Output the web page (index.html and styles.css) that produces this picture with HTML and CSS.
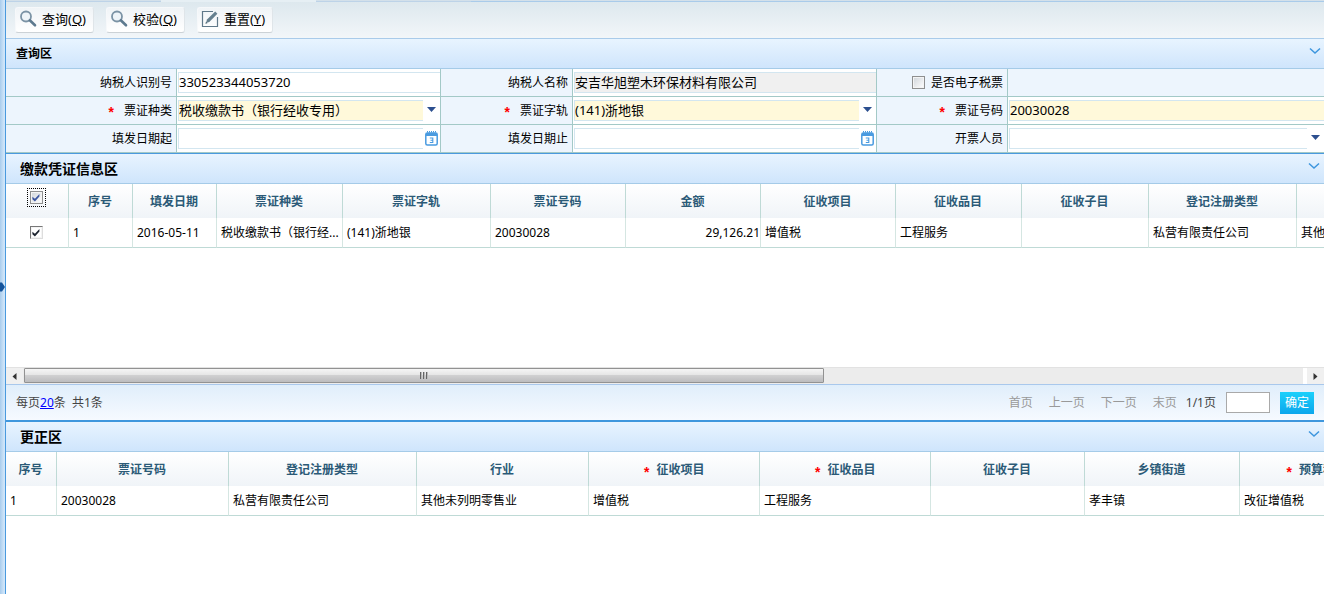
FILE: index.html
```html
<!DOCTYPE html>
<html lang="zh-CN">
<head>
<meta charset="utf-8">
<title>查询区</title>
<link rel="stylesheet" href="styles.css">
</head>
<body>
<div class="app">
  <aside class="rail"><button class="rail-handle" type="button" aria-label="展开"></button></aside>
  <main class="main">
    <div class="tabs"><span class="tab"></span><span class="tab tab-active"></span><span class="tab"></span><span class="tab-rest"></span></div>

    <div class="toolbar">
      <button class="tool" type="button">
        <svg class="tool-icon" viewBox="0 0 18 18"><circle cx="7" cy="6.5" r="5" fill="#eef4f8" stroke="#7b93a5" stroke-width="1.8"/><path d="M10.8 10.3l5.2 5" stroke="#5d7a8f" stroke-width="2.6" stroke-linecap="round"/></svg>
        <span>查询(<u>Q</u>)</span>
      </button>
      <button class="tool" type="button">
        <svg class="tool-icon" viewBox="0 0 18 18"><circle cx="7" cy="6.5" r="5" fill="#eef4f8" stroke="#7b93a5" stroke-width="1.8"/><path d="M10.8 10.3l5.2 5" stroke="#5d7a8f" stroke-width="2.6" stroke-linecap="round"/></svg>
        <span>校验(<u>Q</u>)</span>
      </button>
      <button class="tool" type="button">
        <svg class="tool-icon" viewBox="0 0 18 18"><path d="M12 1.5H1.5v15h15V7" fill="none" stroke="#5f7889" stroke-width="1.2"/><path d="M5 13l1-3.4 8.2-8 2.2 2.2-8.1 8.1z" fill="#66808f"/><path d="M4.4 13.8l.6-2 1.4 1.4z" fill="#3f5a6b"/></svg>
        <span>重置(<u>Y</u>)</span>
      </button>
    </div>

    <section>
      <header class="bar bar-first">
        <h2 class="bar-title title-small">查询区</h2>
        <button class="fold" type="button" aria-label="折叠"><svg class="chevron" viewBox="0 0 12 8"><path d="M1 1.5l5 4.5 5-4.5" fill="none" stroke="#3d96de" stroke-width="1.5"/></svg></button>
      </header>
      <form class="form">
        <label class="name" for="f-id">纳税人识别号</label>
        <div class="field"><input class="box" id="f-id" type="text" value="330523344053720"></div>
        <label class="name" for="f-name">纳税人名称</label>
        <div class="field"><input class="box box-locked" id="f-name" type="text" value="安吉华旭塑木环保材料有限公司" readonly></div>
        <div class="name name-check"><input class="check check-empty" id="f-e" type="checkbox"><label for="f-e">是否电子税票</label></div>
        <div class="field field-blank"></div>

        <label class="name" for="f-kind"><span class="star">*</span>票证种类</label>
        <div class="field"><select class="box box-must" id="f-kind"><option>税收缴款书（银行经收专用）</option></select><svg class="arrow" viewBox="0 0 17 20"><path d="M4 6h9l-4.500 5z" fill="#2c4f8f"/></svg></div>
        <label class="name" for="f-word"><span class="star">*</span>票证字轨</label>
        <div class="field"><select class="box box-must" id="f-word"><option>(141)浙地银</option></select><svg class="arrow" viewBox="0 0 17 20"><path d="M4 6h9l-4.500 5z" fill="#2c4f8f"/></svg></div>
        <label class="name" for="f-no"><span class="star">*</span>票证号码</label>
        <div class="field"><input class="box box-must" id="f-no" type="text" value="20030028"></div>

        <label class="name" for="f-from">填发日期起</label>
        <div class="field"><input class="box" id="f-from" type="text"><button class="date" type="button" aria-label="选择日期"><svg class="cal" viewBox="0 0 13 15"><rect x=".8" y="2" width="11.400" height="12" rx="1.500" fill="#fff" stroke="#4a9be0" stroke-width="1.500"/><path d="M1 2h11v3H1z" fill="#4a9be0"/><path d="M2 .8h9" stroke="#4a9be0" stroke-width="1.400" stroke-dasharray="1 1"/><path d="M4.800 7h3v4.500h-3M5.500 9.200h2.300" fill="none" stroke="#4a9be0" stroke-width="1.100"/></svg></button></div>
        <label class="name" for="f-to">填发日期止</label>
        <div class="field"><input class="box" id="f-to" type="text"><button class="date" type="button" aria-label="选择日期"><svg class="cal" viewBox="0 0 13 15"><rect x=".8" y="2" width="11.400" height="12" rx="1.500" fill="#fff" stroke="#4a9be0" stroke-width="1.500"/><path d="M1 2h11v3H1z" fill="#4a9be0"/><path d="M2 .8h9" stroke="#4a9be0" stroke-width="1.400" stroke-dasharray="1 1"/><path d="M4.800 7h3v4.500h-3M5.500 9.200h2.300" fill="none" stroke="#4a9be0" stroke-width="1.100"/></svg></button></div>
        <label class="name" for="f-who">开票人员</label>
        <div class="field"><select class="box" id="f-who"><option></option></select><svg class="arrow" viewBox="0 0 17 20"><path d="M4 6h9l-4.500 5z" fill="#2c4f8f"/></svg></div>
      </form>
    </section>

    <section>
      <header class="bar bar-ruled">
        <h2 class="bar-title">缴款凭证信息区</h2>
        <button class="fold" type="button" aria-label="折叠"><svg class="chevron" viewBox="0 0 12 8"><path d="M1 1.500l5 4.500 5-4.500" fill="none" stroke="#3d96de" stroke-width="1.500"/></svg></button>
      </header>
      <div class="grid-view grid-tall">
        <table class="data data-pay">
          <colgroup><col class="w63"><col class="w64"><col class="w84"><col class="w126"><col class="w148"><col class="w135"><col class="w135"><col class="w135"><col class="w126"><col class="w127"><col class="w148"><col class="w188"></colgroup>
          <thead><tr><th class="pick pick-all"><input class="check check-focus" type="checkbox" checked aria-label="全选"></th><th>序号</th><th>填发日期</th><th>票证种类</th><th>票证字轨</th><th>票证号码</th><th>金额</th><th>征收项目</th><th>征收品目</th><th>征收子目</th><th>登记注册类型</th><th></th></tr></thead>
          <tbody><tr><td class="pick"><input class="check check-plain" type="checkbox" checked aria-label="选择"></td><td>1</td><td>2016-05-11</td><td>税收缴款书（银行经...</td><td>(141)浙地银</td><td>20030028</td><td class="sum">29,126.21</td><td>增值税</td><td>工程服务</td><td></td><td>私营有限责任公司</td><td>其他未列明零售业</td></tr></tbody>
        </table>
      </div>
      <div class="scroll">
        <button class="scroll-end" type="button" aria-label="向左"><svg class="tri" viewBox="0 0 5 7"><path d="M4.500 0v7L.5 3.500z" fill="#333"/></svg></button>
        <div class="track"><div class="thumb"><i class="grip"></i><i class="grip"></i><i class="grip"></i></div></div>
        <button class="scroll-end scroll-right" type="button" aria-label="向右"><svg class="tri" viewBox="0 0 5 7"><path d="M.5 0v7l4-3.500z" fill="#333"/></svg></button>
      </div>
      <footer class="pager">
        <span class="count">每页<a href="#">20</a>条&nbsp; 共1条</span>
        <nav class="pages"><span class="off">首页</span><span class="off">上一页</span><span class="off">下一页</span><span class="off">末页</span></nav>
        <label class="jump"><span>1/1页</span><input class="jump-box" type="text"></label>
        <button class="ok" type="button">确定</button>
      </footer>
    </section>

    <section>
      <header class="bar bar-heavy">
        <h2 class="bar-title">更正区</h2>
        <button class="fold" type="button" aria-label="折叠"><svg class="chevron" viewBox="0 0 12 8"><path d="M1 1.500l5 4.500 5-4.500" fill="none" stroke="#3d96de" stroke-width="1.500"/></svg></button>
      </header>
      <div class="grid-view">
        <table class="data data-fix">
          <colgroup><col class="w51"><col class="w172"><col class="w188"><col class="w172"><col class="w171"><col class="w171"><col class="w154"><col class="w155"><col class="w154"></colgroup>
          <thead><tr><th>序号</th><th>票证号码</th><th>登记注册类型</th><th>行业</th><th><span class="star">*</span>征收项目</th><th><span class="star">*</span>征收品目</th><th>征收子目</th><th>乡镇街道</th><th><span class="star">*</span>预算科目</th></tr></thead>
          <tbody><tr><td>1</td><td>20030028</td><td>私营有限责任公司</td><td>其他未列明零售业</td><td>增值税</td><td>工程服务</td><td></td><td>孝丰镇</td><td>改征增值税</td></tr></tbody>
        </table>
      </div>
    </section>
  </main>
</div>
</body>
</html>
```

FILE: styles.css
```css
* { box-sizing: border-box; }

body {
  margin: 0;
  background: #fff;
  color: #000;
  font: 12px/16px "Noto Sans", "Noto Sans CJK SC", sans-serif;
  overflow: hidden;
}

button, input, select { font: inherit; color: inherit; margin: 0; padding: 0; border: 0; }
button { background: none; }

.app { display: flex; min-height: 100vh; }
.rail {
  flex: none;
  width: 6px;
  display: flex;
  align-items: center;
  padding-bottom: 20px;
  background: linear-gradient(90deg, #a9ccec, #cfe5f9 80%, #cfe5f9);
  border-right: 1px solid #4a9ade;
  overflow: hidden;
}
.rail-handle { width: 5px; height: 13px; background: #14549c; clip-path: polygon(0 15%, 40% 15%, 100% 50%, 40% 85%, 0 85%); }
.main { flex: 1; min-width: 0; }

.tabs { display: flex; height: 2px; background: #d3e0ea; }
.tab { width: 155px; border-bottom: 1px solid #bdd3e8; }
.tab-active { background: #e6eff4; border-bottom: 0; }
.tab-rest { flex: 1; border-bottom: 1px solid #a9cbea; }

.toolbar {
  display: flex;
  gap: 12px;
  height: 37px;
  padding: 5px 9px;
  background: linear-gradient(#dde8ee, #f2f6f9);
  border-bottom: 1px solid #a9cbea;
}
.tool {
  display: flex;
  align-items: center;
  gap: 5px;
  height: 26px;
  padding: 0 7px 3px 3px;
  font-size: 13px;
  background: linear-gradient(#f0f4f7, #fff);
  border: 1px solid #f6f8fa;
  border-right-color: #dfe5e9;
  border-bottom-color: #ccd2d6;
  border-radius: 3px;
}
.tool-icon { width: 18px; height: 18px; fill: none; }

.bar {
  display: flex;
  align-items: center;
  justify-content: space-between;
  height: 30px;
  padding: 0 4px 0 14px;
  background: linear-gradient(#e8f4ff, #cfe5fc);
  border-bottom: 1px solid #a5cbe8;
}
.bar-first { padding: 0 3px 0 10px; }
.bar-ruled { height: 31px; border-top: 1px solid #4a9ade; }
.bar-heavy { height: 32px; border-top: 2px solid #3f97dd; }
.bar-title { margin: 0; font-size: 14px; line-height: 20px; font-weight: 700; }
.title-small { font-size: 12px; }
.fold { display: flex; padding-bottom: 5px; }
.chevron { width: 12px; height: 8px; }

.form {
  display: grid;
  grid-template-columns: 171fr 264fr 132fr 304fr 131fr 316fr;
  grid-auto-rows: 28px;
}
.name, .field { min-width: 0; border-right: 1px solid #a3c9c7; border-bottom: 1px solid #a3c9c7; }
.name {
  display: flex;
  align-items: center;
  justify-content: flex-end;
  padding-right: 4px;
  background: #edf5fd;
}
.name-check { gap: 6px; }
.field { display: flex; align-items: center; padding-left: 1px; background: #fff; }
.field:nth-child(6n) { border-right: 0; }
.field-blank { background: #edf5fd; }
.box {
  flex: 1;
  min-width: 0;
  height: 21px;
  padding: 0 0 2px;
  appearance: none;
  background: #fff;
  border: 1px solid #d3e6f0;
  border-right: 0;
  border-radius: 0;
  font-size: 13px;
  outline: 0;
}
.box-must { background: #fff9da; }
.box-locked { background: #f0f0f0; }
.arrow { flex: none; width: 17px; height: 20px; }
.date { flex: none; display: flex; justify-content: center; width: 17px; }
.cal { width: 13px; height: 15px; }

.star {
  display: inline-block;
  width: 8px;
  height: 12px;
  margin-right: 9px;
  color: #f00;
  font: 700 14px/18px "Liberation Mono", monospace;
}
th .star { margin-right: 6px; vertical-align: middle; }

.check {
  flex: none;
  appearance: none;
  display: grid;
  place-items: center;
  width: 13px;
  height: 13px;
  border: 1px solid #8e8f8f;
  background: linear-gradient(135deg, #cfd4d9, #fff);
  box-shadow: inset 0 0 0 1px #f4f4f4;
}
.check:checked::before {
  content: "";
  width: 9px;
  height: 9px;
  background: #1c2430;
  clip-path: polygon(10% 42%, 38% 65%, 88% 12%, 88% 40%, 38% 95%, 10% 70%);
}
.check-focus:checked::before { background: #3c56a0; }
.check-focus { outline: 1px dotted #000; outline-offset: 2px; }
.check-plain { background: #fff; border-color: #777 #ddd #ddd #777; }

.grid-view { overflow: hidden; }
.grid-tall { min-height: 183px; }
.data { table-layout: fixed; border-collapse: separate; border-spacing: 0; }
.data-pay { width: 1479px; }
.data-fix { width: 1388px; }
.data th, .data td {
  padding: 0 0 0 4px;
  border-right: 1px solid #bfdad6;
  white-space: nowrap;
  overflow: hidden;
  text-overflow: ellipsis;
}
.data th {
  height: 34px;
  padding: 2px 5px 0 4px;
  color: #2b5a77;
  background: linear-gradient(#fff, #f0f4f8);
  font-weight: 700;
  text-align: center;
}
.data td { height: 30px; text-align: left; border-right-color: #d5e6e2; border-bottom: 1px solid #bfdad6; }
.data .sum { text-align: right; }
.data .pick { padding: 0 2px 0 0; }
.data .pick-all { padding-bottom: 7px; }
.pick .check { margin: 0 auto; }
.w51 { width: 51px; }
.w63 { width: 63px; }
.w64 { width: 64px; }
.w84 { width: 84px; }
.w126 { width: 126px; }
.w127 { width: 127px; }
.w135 { width: 135px; }
.w148 { width: 148px; }
.w154 { width: 154px; }
.w155 { width: 155px; }
.w171 { width: 171px; }
.w172 { width: 172px; }
.w188 { width: 188px; }

.scroll { display: flex; height: 17px; background: #ececec; border-top: 1px solid #e2e2e2; }
.scroll-end { flex: none; display: grid; place-items: center; width: 17px; background: #f0f0f0; }
.scroll-right { border-left: 4px solid #fff; width: 21px; }
.tri { width: 5px; height: 7px; }
.track { flex: 1; padding-left: 1px; }
.thumb {
  display: flex;
  justify-content: center;
  align-items: center;
  gap: 1px;
  width: 63%;
  max-width: 800px;
  height: 15px;
  background: linear-gradient(#f5f5f5, #e6e6e6 45%, #d0d0d1 50%, #bcbcbe);
  border: 1px solid #929292;
  border-radius: 1px;
}
.grip { width: 2px; height: 7px; background: #666; border-right: 1px solid #bbb; }

.pager {
  display: flex;
  align-items: center;
  height: 36px;
  padding: 0 10px;
  color: #444;
  background: linear-gradient(#e0eefb, #f6faff);
  border-top: 1px solid #a9c8ec;
}
.count { flex: 1; }
.count a { color: #00f; }
.pages { display: flex; gap: 16px; margin-right: 9px; }
.off { color: #999; }
.jump { display: flex; align-items: center; gap: 10px; margin-right: 10px; }
.jump-box { width: 44px; height: 21px; background: #fff; border: 1px solid #a9a9a9; }
.ok { width: 34px; height: 22px; color: #fff; background: linear-gradient(#1bd0fb, #0ba6ec); }
```
